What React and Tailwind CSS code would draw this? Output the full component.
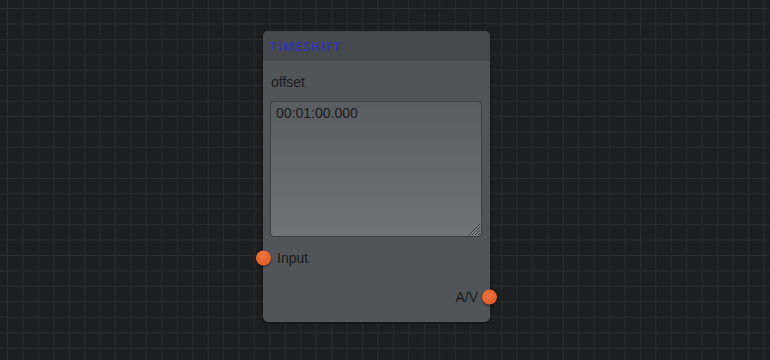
import React from 'react';

const grid =
  'bg-[#1d1e20] bg-[image:linear-gradient(to_right,#292a2d_1px,transparent_1px),linear-gradient(to_bottom,#292a2d_1px,transparent_1px)] bg-size-[15.45px_15.45px] bg-position-[7px_8px]';

function Port({ side }) {
  // the round connector sitting over the node edge
  const place = side === 'left' ? '-left-[7px]' : '-right-[7px]';
  return (
    <span
      className={`absolute top-1/2 -translate-y-1/2 ${place} w-[15px] h-[15px] rounded-full bg-[radial-gradient(circle_at_40%_35%,#f0733c,#d9542a)] shadow-[0_1px_2px_rgba(0,0,0,0.6)]`}
    />
  );
}

function ResizeGrip() {
  return (
    <svg className="absolute right-[2px] bottom-[2px] pointer-events-none" width="12" height="12" viewBox="0 0 12 12">
      <g stroke="#3c3f41" strokeWidth="1">
        <line x1="12" y1="1" x2="1" y2="12" />
        <line x1="12" y1="4" x2="4" y2="12" />
        <line x1="12" y1="7" x2="7" y2="12" />
        <line x1="12" y1="10" x2="10" y2="12" />
      </g>
      <g stroke="#8a8e8f" strokeWidth="1">
        <line x1="12" y1="2.5" x2="2.5" y2="12" />
        <line x1="12" y1="5.5" x2="5.5" y2="12" />
        <line x1="12" y1="8.5" x2="8.5" y2="12" />
      </g>
    </svg>
  );
}

function TimeshiftNode() {
  return (
    <div className="w-[227px] h-[291px] rounded-[5px] bg-[#515557] shadow-[0_1px_3px_rgba(0,0,0,0.5)] flex flex-col font-['Liberation_Sans',Arial,sans-serif] text-[14px] text-[#1c1c1c]">
      <div className="h-[30px] shrink-0 px-[7px] pt-[2px] flex items-center rounded-t-[5px] bg-[#46494b]">
        <span className="font-['Open_Sans',sans-serif] font-bold text-[11.5px] tracking-[1.3px] text-[#3535ae]">
          TIMESHIFT
        </span>
      </div>

      <div className="flex flex-col px-[7px]">
        <label className="mt-[13px] pl-[1px] leading-[16px]">offset</label>
        <div className="relative mt-[11px] w-[212px] h-[136px]">
          <textarea
            className="block w-full h-full resize-none px-[5px] py-[3px] rounded-[4px] border border-[#3d4042] bg-[linear-gradient(to_bottom,#595d5f,#707475)] text-[14px] leading-[16px] text-[#1c1c1c] outline-none font-['Liberation_Sans',Arial,sans-serif]"
            defaultValue="00:01:00.000"
          />
          <ResizeGrip />
        </div>
      </div>

      <div className="relative mt-[13px] h-[16px] flex items-center pl-[14px] leading-[16px]">
        <Port side="left" />
        <span>Input</span>
      </div>

      <div className="relative mt-[23px] h-[16px] flex items-center justify-end pr-[12px] leading-[16px]">
        <span>A/V</span>
        <Port side="right" />
      </div>
    </div>
  );
}

export default function App() {
  return (
    <div className={`w-[770px] h-[360px] overflow-hidden pl-[263px] pt-[31px] ${grid}`}>
      <TimeshiftNode />
    </div>
  );
}
